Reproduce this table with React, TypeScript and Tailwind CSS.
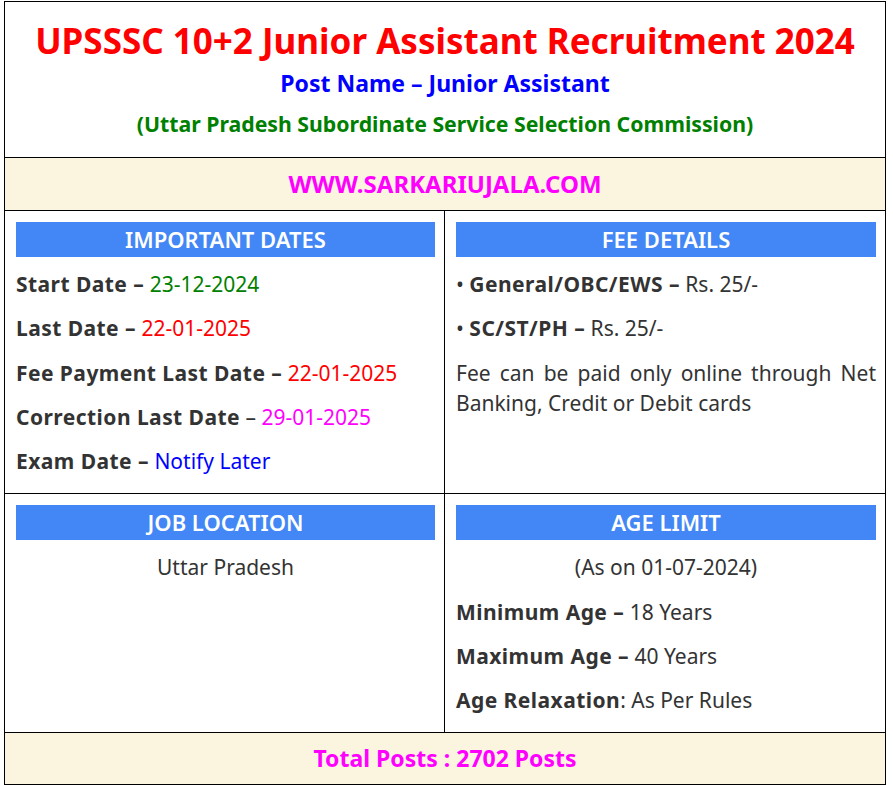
import React from "react";

const Bar = ({ children }: { children: React.ReactNode }) => (
  <div className="h-[35px] bg-[#4287f5] flex items-center justify-center text-white font-semibold text-[22px] leading-none mb-[12px] pb-[2px]">
    {children}
  </div>
);

const P = ({ children, className = "" }: { children: React.ReactNode; className?: string }) => (
  <p className={`text-[21px] leading-[30px] mb-[14.25px] text-[#333333] ${className}`}>{children}</p>
);

const B = ({ children }: { children: React.ReactNode }) => (
  <b className="font-bold tracking-[0.45px]">{children}</b>
);

export default function App() {
  return (
    <div className="bg-white min-h-[786px] pt-px pl-[4px]" style={{ fontFamily: '"Noto Sans", "Open Sans", sans-serif' }}>
      <div className="w-[882px] border border-black">
        <div className="h-[155px] flex flex-col items-center pt-[17px]">
          <div className="text-[35px] leading-[44px] font-bold text-[#ff0000]">UPSSSC 10+2 Junior Assistant Recruitment 2024</div>
          <div className="mt-[5px] text-[23px] leading-[30px] font-bold text-[#0000ff]">Post Name – Junior Assistant</div>
          <div className="mt-[11px] text-[21.25px] leading-[30px] font-bold text-[#008000]">(Uttar Pradesh Subordinate Service Selection Commission)</div>
        </div>
        <div className="h-[53px] border-t border-black bg-[#fbf5df] flex items-center justify-center">
          <span className="text-[24px] font-bold text-[#ff00ff] leading-none">WWW.SARKARIUJALA.COM</span>
        </div>
        <div className="grid grid-cols-2 border-t border-black">
          <div className="border-r border-black pl-[11px] pr-[9px] pt-[11px] pb-[3px]">
            <Bar>IMPORTANT DATES</Bar>
            <P><B>Start Date –</B> <span className="text-[#008000]">23-12-2024</span></P>
            <P><B>Last Date –</B> <span className="text-[#ff0000]">22-01-2025</span></P>
            <P><B>Fee Payment Last Date –</B> <span className="text-[#ff0000]">22-01-2025</span></P>
            <P><B>Correction Last Date</B> – <span className="text-[#ff00ff]">29-01-2025</span></P>
            <P><B>Exam Date –</B> <span className="text-[#0000ff]">Notify Later</span></P>
          </div>
          <div className="pl-[11px] pr-[9px] pt-[11px] pb-[3px]">
            <Bar>FEE DETAILS</Bar>
            <P>• <B>General/OBC/EWS –</B> Rs. 25/-</P>
            <P>• <B>SC/ST/PH –</B> Rs. 25/-</P>
            <P className="text-justify">Fee can be paid only online through Net Banking, Credit or Debit cards</P>
          </div>
        </div>
        <div className="grid grid-cols-2 border-t border-black">
          <div className="border-r border-black pl-[11px] pr-[9px] pt-[11px] pb-[3px]">
            <Bar>JOB LOCATION</Bar>
            <P className="text-center">Uttar Pradesh</P>
          </div>
          <div className="pl-[11px] pr-[9px] pt-[11px] pb-[3px]">
            <Bar>AGE LIMIT</Bar>
            <P className="text-center">(As on 01-07-2024)</P>
            <P><B>Minimum Age –</B> 18 Years</P>
            <P><B>Maximum Age –</B> 40 Years</P>
            <P><B>Age Relaxation</B>: As Per Rules</P>
          </div>
        </div>
        <div className="h-[52px] border-t border-black bg-[#fbf5df] flex items-center justify-center">
          <span className="text-[23px] font-bold text-[#ff00ff] leading-none">Total Posts : 2702 Posts</span>
        </div>
      </div>
    </div>
  );
}
